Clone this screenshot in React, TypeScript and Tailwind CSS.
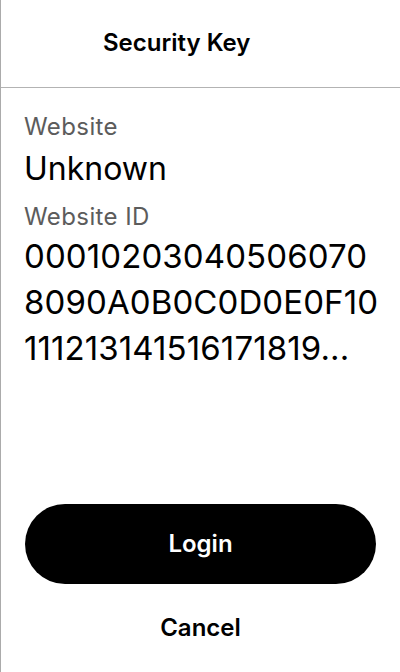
const idLines = ["00010203040506070", "8090A0B0C0D0E0F10", "111213141516171819..."];

export default function App() {
  return (
    <div
      className="flex h-[672px] w-[400px] flex-col border-l border-[#ababab] bg-white text-black"
      style={{ fontFamily: "Inter, 'Noto Sans', sans-serif" }}
    >
      <header className="flex h-[88px] shrink-0 items-center border-b border-[#b3b3b3] pb-[2px] pl-[102px]">
        <h1 className="text-[24px] leading-[30px] font-semibold">Security Key</h1>
      </header>

      <main className="flex flex-1 flex-col pl-[23px] pr-6 pt-[25px]">
        <p className="text-[24px] leading-[28px] tracking-[0.4px] text-[#5c5c5c]">Website</p>
        <p className="mt-2 text-[32px] leading-[40px]">Unknown</p>
        <p className="mt-[14px] text-[24px] leading-[28px] tracking-[0.4px] text-[#5c5c5c]">
          Website ID
        </p>
        <p className="mt-[2px] text-[33px] leading-[46px] tracking-[0.1px]">
          {idLines.map((line) => (
            <span key={line} className="block whitespace-nowrap">
              {line}
            </span>
          ))}
        </p>
      </main>

      <div className="flex flex-col px-6 pb-[20px]">
        <button className="h-20 w-full rounded-full bg-black text-[24px] font-semibold text-white">
          Login
        </button>
        <button className="mt-[20px] h-[48px] text-[24px] font-semibold">Cancel</button>
      </div>
    </div>
  );
}
